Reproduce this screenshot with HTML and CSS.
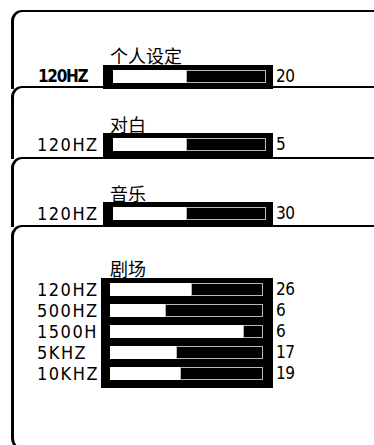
FILE: index.html
```html
<!DOCTYPE html>
<html lang="zh-CN">
<head>
<meta charset="utf-8">
<title>音效设定</title>
<link rel="stylesheet" href="styles.css">
</head>
<body>
<div class="stack">
  <section class="card card--one">
    <h2 class="title">个人设定</h2>
    <div class="row">
      <span class="label label--bold">120HZ</span>
      <div class="bar bar--one"><div class="track"><div class="fill" style="width:80px"></div></div></div>
      <span class="value">20</span>
    </div>
  </section>
  <section class="card card--two">
    <h2 class="title">对白</h2>
    <div class="row">
      <span class="label">120HZ</span>
      <div class="bar bar--two"><div class="track"><div class="fill" style="width:80px"></div></div></div>
      <span class="value">5</span>
    </div>
  </section>
  <section class="card card--three">
    <h2 class="title">音乐</h2>
    <div class="row">
      <span class="label">120HZ</span>
      <div class="bar bar--three"><div class="track"><div class="fill" style="width:80px"></div></div></div>
      <span class="value">30</span>
    </div>
  </section>
  <section class="card card--four">
    <h2 class="title">剧场</h2>
    <div class="eq">
      <div class="eq-col eq-labels">
        <span class="label">120HZ</span>
        <span class="label">500HZ</span>
        <span class="label">1500H</span>
        <span class="label">5KHZ</span>
        <span class="label">10KHZ</span>
      </div>
      <div class="eq-col eq-bars">
        <div class="track"><div class="fill" style="width:72px"></div></div>
        <div class="track"><div class="fill" style="width:98px"></div></div>
        <div class="track"><div class="fill" style="width:20px"></div></div>
        <div class="track"><div class="fill" style="width:87px"></div></div>
        <div class="track"><div class="fill" style="width:83px"></div></div>
      </div>
      <div class="eq-col eq-values">
        <span class="value">26</span>
        <span class="value">6</span>
        <span class="value">6</span>
        <span class="value">17</span>
        <span class="value">19</span>
      </div>
    </div>
  </section>
</div>
</body>
</html>
```

FILE: styles.css
```css
html, body {
  margin: 0;
  padding: 0;
  background: #fff;
  overflow: hidden;
}
body {
  width: 374px;
  height: 445px;
  color: #000;
  font-family: "DejaVu Sans", sans-serif;
}
.stack {
  padding: 10px 0 0 11px;
  margin-right: -4px;
}
.card {
  border-top: 2px solid #000;
  border-left: 3px solid #000;
  border-top-left-radius: 11px;
  padding-left: 23px;
  box-sizing: border-box;
}
.card--one { padding-top: 34px; }
.card--two { padding-top: 27px; }
.card--three { padding-top: 25px; }
.card--four {
  padding-top: 32px;
  height: 226px;
  border-bottom: 2px solid #000;
  border-bottom-left-radius: 13px;
}
.title {
  margin: 0 0 0 73px;
  font-family: "Noto Sans CJK SC", sans-serif;
  font-weight: normal;
  font-size: 18px;
  line-height: 18px;
}
.card--one .title,
.card--four .title { margin-bottom: 1px; }

.row {
  display: flex;
  align-items: flex-start;
}
.card--one .row { margin-bottom: -3px; }
.card--two .row { margin-bottom: -2px; }
.card--three .row { margin-bottom: -2px; }

.label {
  display: block;
  width: 66px;
  margin-top: 5px;
  font-family: "DejaVu Sans Condensed", "DejaVu Sans", sans-serif;
  font-stretch: condensed;
  font-size: 18px;
  line-height: 13px;
  letter-spacing: 1.5px;
  white-space: nowrap;
}
.label--bold {
  margin-left: 1px;
  width: 65px;
  font-weight: bold;
  font-size: 17px;
  letter-spacing: -1.3px;
}
.value {
  display: block;
  margin-top: 5px;
  margin-left: 3px;
  font-family: "DejaVu Sans Condensed", "DejaVu Sans", sans-serif;
  font-stretch: condensed;
  font-size: 17px;
  line-height: 13px;
  letter-spacing: -0.5px;
}
.bar {
  background: #000;
  padding: 5px 7px 6px 10px;
}
.bar--two { padding-bottom: 8px; }
.bar--three { padding-bottom: 7px; }

.track {
  width: 153px;
  height: 13px;
  background: #fff;
  display: flex;
  justify-content: flex-end;
}
.fill {
  height: 13px;
  background: #000;
  border: 1px solid #b8b8b8;
  box-sizing: border-box;
}

.eq {
  display: flex;
  align-items: flex-start;
}
.eq-col {
  display: flex;
  flex-direction: column;
  gap: 8px;
  padding-top: 5px;
}
.eq-labels .label {
  width: 64px;
  margin-top: 0;
}
.eq-bars {
  background: #000;
  padding: 5px 10px 8px 9px;
}
.eq-values .value { margin-top: 0; }
```
